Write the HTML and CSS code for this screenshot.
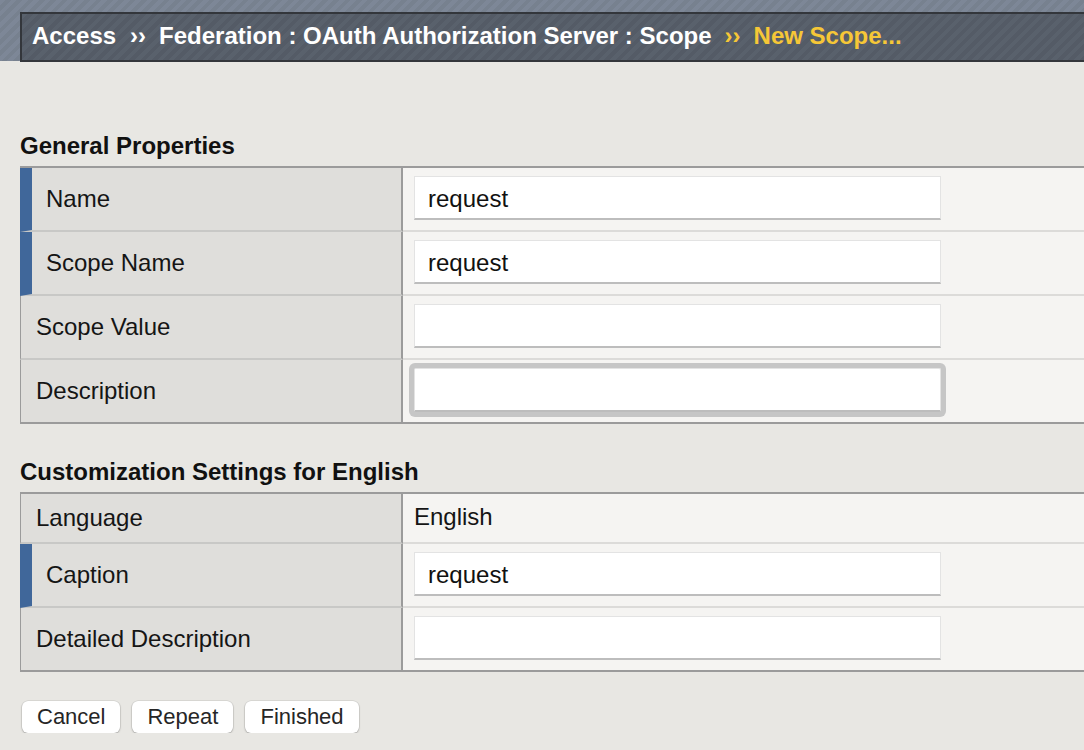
FILE: index.html
```html
<!DOCTYPE html>
<html lang="en">
<head>
<meta charset="utf-8">
<title>New Scope</title>
<link rel="stylesheet" href="styles.css">
</head>
<body>
<header class="topbar">
  <div class="crumbs">
    <span class="crumb">Access</span>
    <span class="sep">››</span>
    <span class="crumb">Federation : OAuth Authorization Server : Scope</span>
    <span class="sep sep-current">››</span>
    <span class="crumb current">New Scope...</span>
  </div>
</header>

<main class="content">
  <h2 class="section-title first">General Properties</h2>
  <div class="props">
    <div class="row">
      <div class="label required">Name</div>
      <div class="value"><input class="field" type="text" value="request"></div>
    </div>
    <div class="row">
      <div class="label required">Scope Name</div>
      <div class="value"><input class="field" type="text" value="request"></div>
    </div>
    <div class="row">
      <div class="label">Scope Value</div>
      <div class="value"><input class="field" type="text" value=""></div>
    </div>
    <div class="row last">
      <div class="label">Description</div>
      <div class="value"><input class="field focused" type="text" value=""></div>
    </div>
  </div>

  <h2 class="section-title">Customization Settings for English</h2>
  <div class="props">
    <div class="row short">
      <div class="label">Language</div>
      <div class="value text">English</div>
    </div>
    <div class="row">
      <div class="label required">Caption</div>
      <div class="value"><input class="field" type="text" value="request"></div>
    </div>
    <div class="row last">
      <div class="label">Detailed Description</div>
      <div class="value"><input class="field" type="text" value=""></div>
    </div>
  </div>

  <div class="actions">
    <button class="btn" type="button">Cancel</button>
    <button class="btn" type="button">Repeat</button>
    <button class="btn" type="button">Finished</button>
  </div>
</main>
</body>
</html>
```

FILE: styles.css
```css
* { box-sizing: border-box; }

html, body {
  margin: 0;
  padding: 0;
  background: #e8e7e3;
  font-family: "Liberation Sans", Arial, sans-serif;
  color: #111;
  overflow: hidden;
}

.topbar {
  height: 61px;
  padding: 12px 0 0 20px;
  background: repeating-linear-gradient(135deg, #7d8797 0 4px, #77818f 4px 8px);
}

.crumbs {
  height: 50px;
  margin-right: -20px;
  border: 2px solid #33363b;
  border-right: none;
  background: repeating-linear-gradient(135deg, #59616c 0 4px, #545b66 4px 8px);
  display: flex;
  align-items: center;
  padding: 0 0 2px 10px;
  font-weight: bold;
  font-size: 24px;
  color: #ffffff;
  white-space: nowrap;
}

.sep {
  margin: 0 13px 0 14px;
  font-size: 24px;
}

.sep-current,
.current {
  color: #f6c737;
}

.sep-current { margin-left: 13px; margin-right: 13px; }

.content {
  padding-left: 20px;
}

.section-title {
  margin: 36px 0 8px 0;
  font-size: 24px;
  line-height: 24px;
  font-weight: bold;
  color: #111;
}

.section-title.first {
  margin-top: 73px;
}

.props {
  border-top: 2px solid #9b9b9b;
}

.row {
  display: flex;
  height: 64px;
}

.row.short {
  height: 50px;
}

.label {
  width: 383px;
  flex: none;
  display: flex;
  align-items: center;
  padding-left: 15px;
  background: #dfdedb;
  border-left: 1px solid #9b9b9b;
  border-right: 2px solid #9b9b9b;
  border-bottom: 2px solid #c8c8c6;
  font-size: 24px;
  color: #151515;
}

.label.required {
  border-left: 12px solid #40679a;
  padding-left: 14px;
}

.row.last .label,
.row.last .value {
  border-bottom-color: #9b9b9b;
}

.value {
  flex: 1;
  display: flex;
  align-items: center;
  padding: 0 0 2px 11px;
  background: #f5f4f2;
  border-bottom: 2px solid #dcdbd9;
}

.value.text {
  font-size: 24px;
  color: #151515;
}

.field {
  width: 527px;
  height: 44px;
  padding: 2px 0 0 13px;
  border: 1px solid #e3e3e3;
  border-bottom: 2px solid #bdbdbd;
  border-radius: 0;
  background: #ffffff;
  font-family: "Liberation Sans", Arial, sans-serif;
  font-size: 24px;
  color: #111;
  outline: none;
}

.field.focused {
  box-shadow: 0 0 0 5px #c6c6c6;
  border-radius: 2px;
}

.actions {
  display: flex;
  gap: 12px;
  margin: 29px 0 0 2px;
}

.btn {
  height: 32px;
  padding: 0 15px;
  border: none;
  border-radius: 6px;
  background: #ffffff;
  box-shadow: 0 0 0 0.5px rgba(0, 0, 0, 0.12), 0 1px 2px rgba(0, 0, 0, 0.25);
  font-family: "Liberation Sans", Arial, sans-serif;
  font-size: 22px;
  color: #262626;
  cursor: pointer;
}
```
